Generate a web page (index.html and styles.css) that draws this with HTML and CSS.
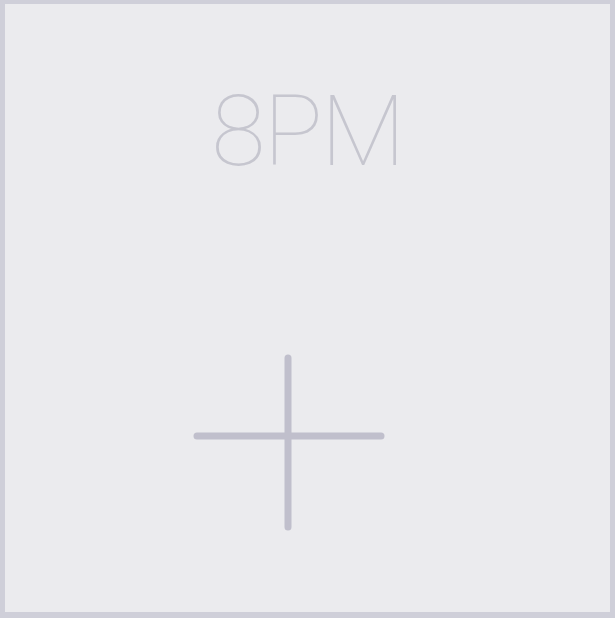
FILE: index.html
```html
<!DOCTYPE html>
<html lang="en">
<head>
  <meta charset="UTF-8">
  <meta name="viewport" content="width=device-width, initial-scale=1.0">
  <link rel="stylesheet" href="styles.css">
  <title>Add slot</title>
</head>
<body>

<div class="slot">
  <div class="time">8PM</div>
  <button class="add" aria-label="Add">
    <svg width="200" height="190" viewBox="0 0 200 190">
      <line x1="10" y1="86" x2="194" y2="86" />
      <line x1="101" y1="8" x2="101" y2="177" />
    </svg>
  </button>
</div>

</body>
</html>
```

FILE: styles.css
```css
body {
  margin: 0;
  background-color: #ebebee;
}

.slot {
  box-sizing: border-box;
  width: 615px;
  height: 618px;
  border: solid #cfcfd9;
  border-width: 4px 5px 6px 5px;
  background-color: #ebebee;
  display: flex;
  flex-direction: column;
  align-items: center;
}

.time {
  margin-top: 67px;
  font-family: Roboto, "Liberation Sans", sans-serif;
  font-weight: 100;
  font-size: 99px;
  line-height: 120px;
  letter-spacing: -2px;
  color: #c6c6cf;
}

.add {
  margin-top: 159px;
  margin-left: -42px;
  padding: 0;
  border: none;
  background: none;
}

.add svg line {
  stroke: #c0bfcc;
  stroke-width: 7;
  stroke-linecap: round;
}
```
